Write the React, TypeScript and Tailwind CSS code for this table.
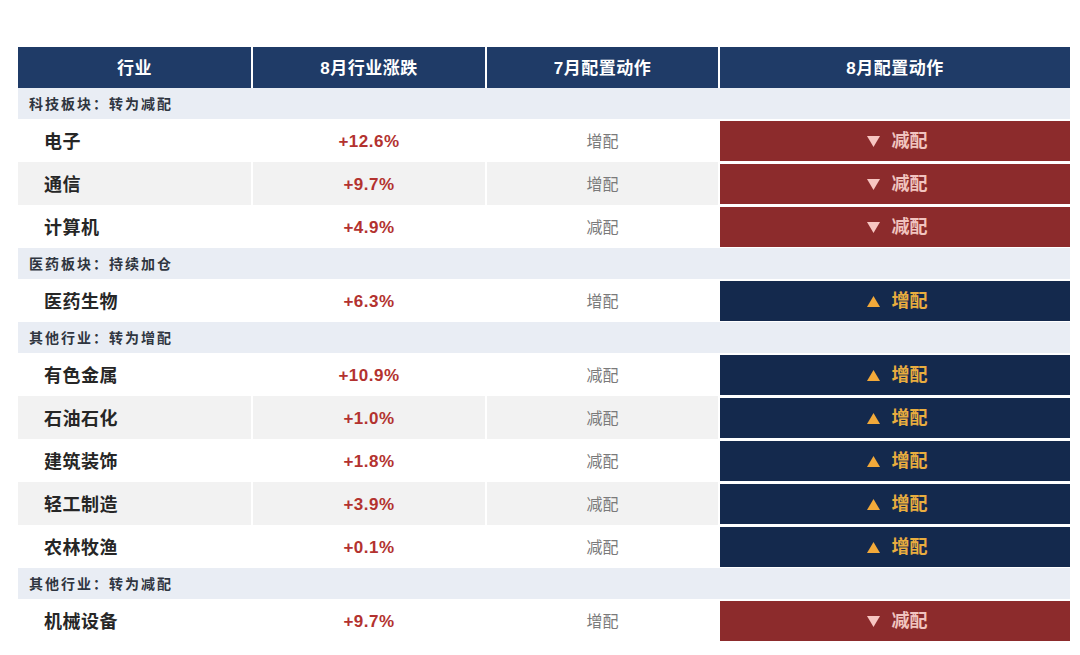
import React from "react";

type Row =
  | { kind: "section"; label: string }
  | { kind: "data"; name: string; pct: string; jul: string; aug: "up" | "down"; gray?: boolean };

const rows: Row[] = [
  { kind: "section", label: "科技板块：转为减配" },
  { kind: "data", name: "电子", pct: "+12.6%", jul: "增配", aug: "down" },
  { kind: "data", name: "通信", pct: "+9.7%", jul: "增配", aug: "down", gray: true },
  { kind: "data", name: "计算机", pct: "+4.9%", jul: "减配", aug: "down" },
  { kind: "section", label: "医药板块：持续加仓" },
  { kind: "data", name: "医药生物", pct: "+6.3%", jul: "增配", aug: "up" },
  { kind: "section", label: "其他行业：转为增配" },
  { kind: "data", name: "有色金属", pct: "+10.9%", jul: "减配", aug: "up" },
  { kind: "data", name: "石油石化", pct: "+1.0%", jul: "减配", aug: "up", gray: true },
  { kind: "data", name: "建筑装饰", pct: "+1.8%", jul: "减配", aug: "up" },
  { kind: "data", name: "轻工制造", pct: "+3.9%", jul: "减配", aug: "up", gray: true },
  { kind: "data", name: "农林牧渔", pct: "+0.1%", jul: "减配", aug: "up" },
  { kind: "section", label: "其他行业：转为减配" },
  { kind: "data", name: "机械设备", pct: "+9.7%", jul: "增配", aug: "down" },
];

const font = { fontFamily: '"Liberation Sans", "Noto Sans CJK SC", sans-serif' };

function Tri({ up, color }: { up: boolean; color: string }) {
  return (
    <svg width="13" height="11" viewBox="0 0 13 11" className="shrink-0">
      {up ? (
        <polygon points="6.5,0 13,11 0,11" fill={color} />
      ) : (
        <polygon points="0,0 13,0 6.5,11" fill={color} />
      )}
    </svg>
  );
}

export default function App() {
  return (
    <div className="w-[1080px] h-[655px] bg-white pt-[47px] pl-[18px]" style={font}>
      <div className="w-[1052px] flex flex-col">
        <div className="grid grid-cols-[233px_232px_231px_350px] gap-x-[2px] h-[41px]">
          {["行业", "8月行业涨跌", "7月配置动作", "8月配置动作"].map((h) => (
            <div
              key={h}
              className="bg-[#1f3b67] text-white font-bold text-[17px] tracking-[0.5px] flex items-center justify-center pt-[2px]"
            >
              {h}
            </div>
          ))}
        </div>
        {rows.map((r, i) =>
          r.kind === "section" ? (
            <div
              key={i}
              className="h-[31px] bg-[#e9edf4] flex items-center pl-[11px] pt-[1px] text-[14px] font-bold tracking-[2px] text-[#2f3540]"
            >
              {r.label}
            </div>
          ) : (
            <div key={i} className="grid grid-cols-[233px_232px_231px_350px] gap-x-[2px] h-[43px]">
              <div
                className={`${r.gray ? "bg-[#f2f2f2]" : "bg-white"} flex items-center pl-[26px] pt-[3px] text-[18px] font-bold text-[#262626] tracking-[0.5px]`}
              >
                {r.name}
              </div>
              <div
                className={`${r.gray ? "bg-[#f2f2f2]" : "bg-white"} flex items-center justify-center pt-[3px] text-[17px] font-bold text-[#b3322f] tracking-[0.5px]`}
              >
                {r.pct}
              </div>
              <div
                className={`${r.gray ? "bg-[#f2f2f2]" : "bg-white"} flex items-center justify-center pt-[2px] text-[16px] text-[#7a7a7a]`}
              >
                {r.jul}
              </div>
              <div className="bg-white py-[1.5px]">
                {r.aug === "down" ? (
                  <div className="h-full bg-[#8c2b2c] flex items-center justify-center gap-[12px] pl-[4px] pt-[2px]">
                    <Tri up={false} color="#f7c6c2" />
                    <span className="text-[18px] font-bold text-[#f1c4bf]">减配</span>
                  </div>
                ) : (
                  <div className="h-full bg-[#14294d] flex items-center justify-center gap-[12px] pl-[4px] pt-[2px]">
                    <Tri up={true} color="#f2a93a" />
                    <span className="text-[18px] font-bold text-[#e9ad3f]">增配</span>
                  </div>
                )}
              </div>
            </div>
          )
        )}
      </div>
    </div>
  );
}
